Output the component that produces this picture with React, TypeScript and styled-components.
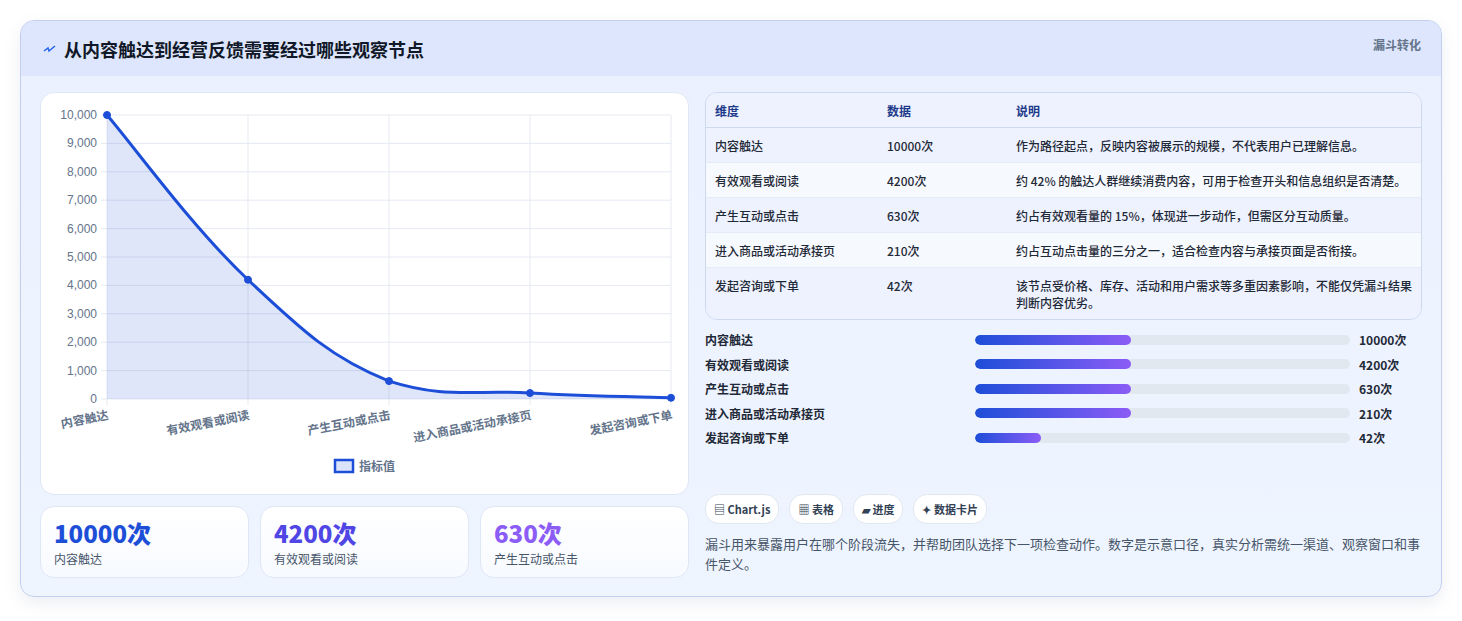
import React from 'react';
import styled, { createGlobalStyle } from 'styled-components';

const GlobalStyle = createGlobalStyle`
  body {
    margin: 0;
    background: #ffffff;
    font-family: "Noto Sans CJK SC", "Noto Sans", sans-serif;
  }
`;

const steps = [
  { name: '内容触达', value: 10000, note: '作为路径起点，反映内容被展示的规模，不代表用户已理解信息。' },
  { name: '有效观看或阅读', value: 4200, note: '约 42% 的触达人群继续消费内容，可用于检查开头和信息组织是否清楚。' },
  { name: '产生互动或点击', value: 630, note: '约占有效观看量的 15%，体现进一步动作，但需区分互动质量。' },
  { name: '进入商品或活动承接页', value: 210, note: '约占互动点击量的三分之一，适合检查内容与承接页面是否衔接。' },
  { name: '发起咨询或下单', value: 42, note: '该节点受价格、库存、活动和用户需求等多重因素影响，不能仅凭漏斗结果判断内容优劣。' },
];

const barWidths = [41.6, 41.6, 41.6, 41.6, 17.6];

const Page = styled.div`
  padding: 20px;
`;

const Card = styled.div`
  border: 1px solid #c3cff0;
  border-radius: 14px;
  background: linear-gradient(180deg, #eaf0fe 0%, #eff5ff 100%);
  overflow: hidden;
  box-shadow: 0 6px 16px rgba(100, 116, 160, 0.12);
`;

const Header = styled.div`
  height: 55px;
  background: #dde6fd;
  display: flex;
  align-items: center;
  padding: 0 20px 0 22px;
  position: relative;
`;

const Title = styled.h1`
  margin: 0;
  font-size: 18px;
  font-weight: 700;
  color: #111827;
  display: flex;
  align-items: center;
  gap: 8px;
`;

const Tag = styled.span`
  position: absolute;
  right: 20px;
  top: 15px;
  font-size: 12px;
  font-weight: 700;
  color: #64748b;
`;

const Body = styled.div`
  display: grid;
  grid-template-columns: 649px 1fr;
  gap: 16px;
  padding: 16px 19px 18px 19px;
`;

const Col = styled.div`
  display: flex;
  flex-direction: column;
`;

const ChartCard = styled.div`
  background: #fff;
  border: 1px solid #dfe6f5;
  border-radius: 14px;
  height: 403px;
  box-sizing: border-box;
`;

const Stats = styled.div`
  display: grid;
  grid-template-columns: repeat(3, 1fr);
  gap: 11px;
  margin-top: 11px;
`;

const Stat = styled.div`
  background: linear-gradient(180deg, #ffffff, #f7faff);
  border: 1px solid #dfe6f5;
  border-radius: 14px;
  height: 72px;
  padding: 11px 13px;
  box-sizing: border-box;
`;

const StatNum = styled.div<{ $c: string }>`
  font-size: 24px;
  font-weight: 800;
  color: ${p => p.$c};
  line-height: 30px;
`;

const StatLabel = styled.div`
  font-size: 12px;
  color: #475569;
  margin-top: 2px;
`;

const Table = styled.div`
  border: 1px solid #cfd9ee;
  border-radius: 12px;
  overflow: hidden;
  font-size: 12px;
  color: #1f2937;
`;

const Row = styled.div<{ $bg: string; $head?: boolean }>`
  display: grid;
  grid-template-columns: 172px 129px 1fr;
  background: ${p => p.$bg};
  border-bottom: 1px solid ${p => (p.$head ? '#cfd9ee' : '#e6ecf7')};
  color: ${p => (p.$head ? '#1e3a8a' : '#1f2937')};
  font-weight: ${p => (p.$head ? 700 : 500)};
  &:last-child { border-bottom: none; }
`;

const Cell = styled.div`
  padding: 8.5px 8px 8.5px 9px;
  line-height: 17px;
`;

const Bars = styled.div`
  display: flex;
  flex-direction: column;
  gap: 8.5px;
  margin-top: 11px;
  height: 163px;
`;

const BarRow = styled.div`
  display: grid;
  grid-template-columns: 270px 375px 1fr;
  align-items: center;
  font-size: 12px;
  font-weight: 600;
  color: #1f2937;
  height: 16px;
`;

const Track = styled.div`
  height: 10px;
  background: #e2e8f0;
  border-radius: 5px;
  overflow: hidden;
`;

const Fill = styled.div`
  height: 100%;
  border-radius: 5px;
  background: linear-gradient(90deg, #1d4ed8, #8b5cf6);
`;

const BarVal = styled.span`
  padding-left: 9px;
`;

const Chips = styled.div`
  display: flex;
  gap: 10px;
`;

const Chip = styled.span`
  height: 28px;
  padding: 0 8px;
  border: 1px solid #e2e8f0;
  background: #fff;
  border-radius: 14px;
  font-size: 11px;
  font-weight: 700;
  color: #334155;
  display: flex;
  align-items: center;
  gap: 3px;
`;

const Desc = styled.p`
  margin: 10px 0 0;
  font-size: 13px;
  line-height: 20px;
  color: #475569;
`;

const xs = [66, 207, 348, 489, 630];
const yOf = (v: number) => 22 + (1 - v / 10000) * 284;

function curve() {
  const pts = steps.map((s, i) => [xs[i], yOf(s.value)]);
  let d = `M${pts[0][0]},${pts[0][1]}`;
  for (let i = 0; i < pts.length - 1; i++) {
    const p0 = pts[Math.max(0, i - 1)];
    const p1 = pts[i];
    const p2 = pts[i + 1];
    const p3 = pts[Math.min(pts.length - 1, i + 2)];
    const t = 0.2;
    const c1 = [p1[0] + (p2[0] - p0[0]) * t, Math.min(p1[1] + (p2[1] - p0[1]) * t, 306)];
    const c2 = [p2[0] - (p3[0] - p1[0]) * t, Math.min(p2[1] - (p3[1] - p1[1]) * t, 306)];
    d += ` C${c1[0]},${c1[1]} ${c2[0]},${c2[1]} ${p2[0]},${p2[1]}`;
  }
  return { d, pts };
}

const Chart = () => {
  const { d, pts } = curve();
  const ticks = Array.from({ length: 11 }, (_, i) => i * 1000);
  return (
    <svg width="647" height="401" viewBox="0 0 647 401">
      {ticks.map(t => (
        <g key={t}>
          <line x1={60} x2={630} y1={yOf(t)} y2={yOf(t)} stroke="#e5e9f2" />
          <text x={56} y={yOf(t) + 4} fontSize="12" fill="#64748b" textAnchor="end" fontFamily="Liberation Sans, sans-serif">
            {t.toLocaleString('en-US')}
          </text>
        </g>
      ))}
      {xs.map(x => (
        <line key={x} x1={x} x2={x} y1={22} y2={312} stroke="#e5e9f2" />
      ))}
      <path d={`${d} L630,306 L66,306 Z`} fill="rgba(29,78,216,0.14)" />
      <path d={d} fill="none" stroke="#1d4ed8" strokeWidth="3" />
      {pts.map((p, i) => (
        <circle key={i} cx={p[0]} cy={p[1]} r="3.5" fill="#1d4ed8" stroke="#1d4ed8" />
      ))}
      {steps.map((s, i) => (
        <text
          key={s.name}
          x={xs[i] + 2}
          y={326}
          fontSize="12"
          fontWeight="600"
          fill="#64748b"
          textAnchor="end"
          transform={`rotate(-11 ${xs[i] + 2} 326)`}
        >
          {s.name}
        </text>
      ))}
      <rect x={294} y={367} width={18} height={12} fill="#dbe4fb" stroke="#1d4ed8" strokeWidth="2.5" />
      <text x={318} y={378} fontSize="12" fontWeight="600" fill="#64748b">指标值</text>
    </svg>
  );
};

export default function App() {
  return (
    <Page>
      <GlobalStyle />
      <Card>
        <Header>
          <Title>
            <svg width="13" height="10" viewBox="0 0 13 10">
              <path d="M1 7 L5 4 L6 7 L12 2" fill="none" stroke="#2563eb" strokeWidth="1.5" />
            </svg>
            从内容触达到经营反馈需要经过哪些观察节点
          </Title>
          <Tag>漏斗转化</Tag>
        </Header>
        <Body>
          <Col>
            <ChartCard>
              <Chart />
            </ChartCard>
            <Stats>
              <Stat>
                <StatNum $c="#1d4ed8">10000次</StatNum>
                <StatLabel>内容触达</StatLabel>
              </Stat>
              <Stat>
                <StatNum $c="#4f46e5">4200次</StatNum>
                <StatLabel>有效观看或阅读</StatLabel>
              </Stat>
              <Stat>
                <StatNum $c="#8b5cf6">630次</StatNum>
                <StatLabel>产生互动或点击</StatLabel>
              </Stat>
            </Stats>
          </Col>
          <Col>
            <Table>
              <Row $bg="#edf2fe" $head>
                <Cell>维度</Cell>
                <Cell>数据</Cell>
                <Cell>说明</Cell>
              </Row>
              {steps.map((s, i) => (
                <Row key={s.name} $bg={i % 2 === 0 ? '#edf2fe' : '#f6f9fd'}>
                  <Cell>{s.name}</Cell>
                  <Cell>{s.value}次</Cell>
                  <Cell>{s.note}</Cell>
                </Row>
              ))}
            </Table>
            <Bars>
              {steps.map((s, i) => (
                <BarRow key={s.name}>
                  <span>{s.name}</span>
                  <Track>
                    <Fill style={{ width: `${barWidths[i]}%` }} />
                  </Track>
                  <BarVal>{s.value}次</BarVal>
                </BarRow>
              ))}
            </Bars>
            <Chips>
              <Chip>▤ Chart.js</Chip>
              <Chip>▦ 表格</Chip>
              <Chip>▰ 进度</Chip>
              <Chip>✦ 数据卡片</Chip>
            </Chips>
            <Desc>
              漏斗用来暴露用户在哪个阶段流失，并帮助团队选择下一项检查动作。数字是示意口径，真实分析需统一渠道、观察窗口和事件定义。
            </Desc>
          </Col>
        </Body>
      </Card>
    </Page>
  );
}
